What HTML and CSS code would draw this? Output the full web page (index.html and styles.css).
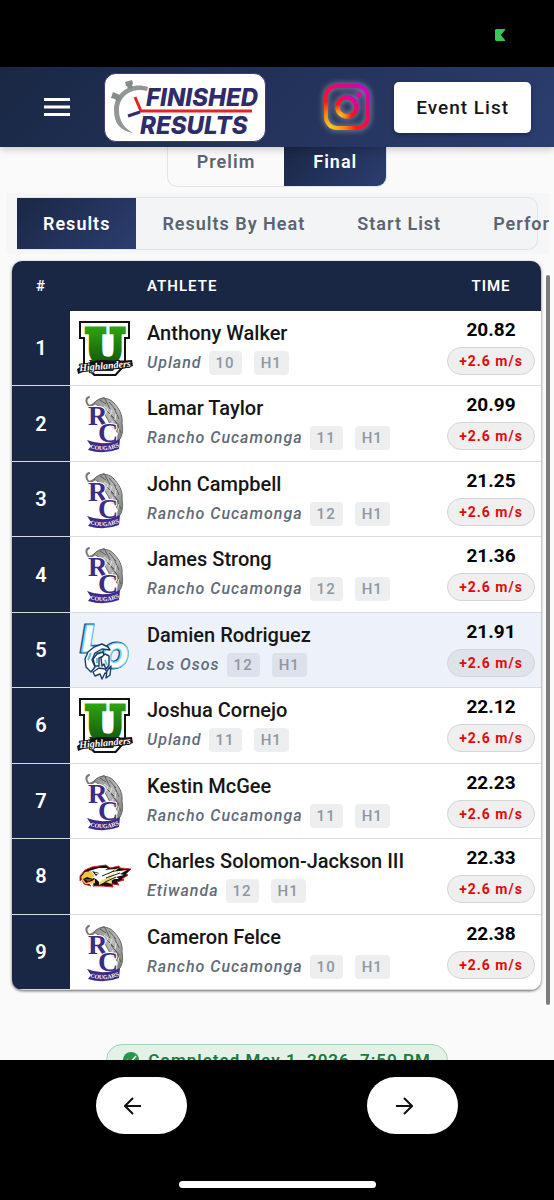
FILE: index.html
```html
<!DOCTYPE html>
<html lang="en">
<head>
<meta charset="utf-8">
<meta name="viewport" content="width=device-width, initial-scale=1">
<title>Finished Results</title>
<link rel="stylesheet" href="styles.css">
</head>
<body>
<svg class="defs" width="0" height="0" aria-hidden="true">
  <defs>
    <linearGradient id="green" x1="0" y1="0" x2="0" y2="1"><stop offset="0" stop-color="#2fb012"/><stop offset="1" stop-color="#0d4a08"/></linearGradient>
    <radialGradient id="insta" cx="0.1" cy="1" r="1.25"><stop offset="0" stop-color="#ffd21c"/><stop offset="0.3" stop-color="#ff7a0a"/><stop offset="0.5" stop-color="#ff1a12"/><stop offset="0.72" stop-color="#f4094e"/><stop offset="1" stop-color="#cf00c4"/></radialGradient>
    <linearGradient id="fur" x1="0" y1="0" x2="1" y2="1"><stop offset="0" stop-color="#8d8d8d"/><stop offset="0.5" stop-color="#b9b9b9"/><stop offset="1" stop-color="#777"/></linearGradient>
  </defs>
  <symbol id="upland" viewBox="0 0 56 58">
    <path d="M2 1H53V19H49V45L39 56H17L6 45V19H2Z" fill="#111"/>
    <path d="M4 3H51V17H47V44L38 54H18L8 44V17H4Z" fill="#fff"/>
    <path d="M12 40L19 51H36L43 40Z" fill="#123d0c"/>
    <text x="28" y="42" text-anchor="middle" class="mark-u">U</text>
    <path d="M0 49Q14 39 28 40T55 40L56 46Q44 50 29 49T1 54Z" fill="#151515"/>
    <text x="28" y="49" text-anchor="middle" transform="rotate(-5 28 46)" class="mark-high">Highlanders</text>
  </symbol>
  <symbol id="rancho" viewBox="0 0 56 58">
    <path d="M12 11C8 7 9 3 12 2M12 11C17 11 19 5 27 3" fill="none" stroke="#777" stroke-width="2" stroke-linecap="round"/>
    <path d="M17 8C22 2 31 2 36 7C42 13 46 20 45 28C46 34 46 39 43 44L39 45L41 39L38 33L34 31L31 25L27 18L23 12Z" fill="url(#fur)" stroke="#686868"/>
    <path d="M23 5L29 9M28 4L33 14M32 7L39 15M30 16L37 23M37 13L42 24M34 21L42 31M39 27L44 38M35 28L41 35" stroke="#5c5c5c" fill="none"/>
    <path d="M27 11L31 14L29 18M35 15L33 20M39 19L38 25M36 26L34 30M42 33L40 41" stroke="#e2e2e2" fill="none"/>
    <text x="11" y="30" class="mark-r">R</text>
    <text x="21" y="47" class="mark-c">C</text>
    <path d="M10 45Q27 52 43 44L42 54Q27 60 11 55L14 51Z" fill="#3d2b86"/>
    <path id="ribbon" d="M13 53Q27 58 41 52" fill="none"/>
    <text class="mark-cougars"><textPath href="#ribbon">COUGARS</textPath></text>
  </symbol>
  <symbol id="losos" viewBox="0 0 56 58">
    <g class="lo-shadow"><text x="4" y="30" class="mark-l">L</text><text x="24" y="46" class="mark-o">O</text></g>
    <g class="lo-face"><text x="5" y="30" class="mark-l">L</text><text x="25" y="46" class="mark-o">O</text></g>
    <g fill="#fff" stroke="#183c6d" stroke-width="1.4" stroke-linejoin="round">
      <path d="M14 50L9 45L8 37L11 30L17 25L25 22L31 25L33 28L25 27L18 31L15 38L18 45Z"/>
      <path d="M18 44L16 37L20 32L26 30L27 34L22 36L22 44Z"/>
      <path d="M25 44L24 36L28 32L32 34L32 43L29 47L27 42Z"/>
      <path d="M16 50L22 46L28 47L31 52L28 51L25 57L23 52L18 54Z"/>
      <path d="M30 49L34 44L33 53L29 56Z"/>
    </g>
    <path d="M11 38L14 31M20 41L20 36M28 38L30 43" stroke="#68bde5" fill="none" stroke-width="2"/>
  </symbol>
  <symbol id="etiwanda" viewBox="0 0 56 58">
    <path d="M3 28L8 22L15 19L29 17L33 20L42 18L43 20L54 21L49 26L51 27L45 31L47 32L40 34L42 37L35 36L36 39L25 38L16 38L17 34L11 35L14 38L7 36L5 31L3 33Z" fill="#171010" stroke="#db1f27" stroke-width="1"/>
    <path d="M12 23L22 20L31 20L28 22L38 21L34 24L50 22L43 26L47 27L39 29L42 31L34 31L35 35L29 33L23 35L19 31L14 29Z" fill="#fff"/>
    <path d="M22 34L29 30L38 24L34 30L41 29L34 33L35 36L28 34L22 37ZM35 22L42 20L38 23Z" fill="#eedb79"/>
    <path d="M4 29L8 24L14 23L17 27L16 31L10 29L6 31L9 35L15 33L18 31L18 35L12 36L8 36L5 32Z" fill="#ebc744"/>
    <path d="M15 23L22 25L19 28Z" fill="#171010"/><path d="M18 25L21 26" stroke="#fff"/>
    <path d="M8 31L15 31L11 34Z" fill="#c5252b"/>
    <path d="M25 28L37 23M29 30L43 25M28 34L39 29" stroke="#292019" fill="none"/>
  </symbol>
</svg>
<div class="app">
  <div class="system-bar">
    <svg class="battery" viewBox="0 0 10 12" aria-hidden="true"><path d="M1 0H10V1L6 6L10 11V12H1L0 11V1Z" fill="#36c759"/></svg>
  </div>
  <header class="header">
    <button class="menu" aria-label="Menu"><svg viewBox="0 0 26 18" aria-hidden="true"><path d="M0 1.5H26M0 9H26M0 16.5H26" stroke="#fff" stroke-width="3"/></svg></button>
    <a class="brand" href="#" aria-label="Finished Results">
      <svg viewBox="0 0 160 67" aria-hidden="true">
        <path d="M43 13C26 7 9 19 9 36C9 50 16 57 28 59C19 54 14 47 14 36C14 22 27 13 42 17Z" fill="#919696"/>
        <path d="M20 8L27 6L28 10L27 11L28 14L23 15L22 12L21 12ZM8 18L15 21L14 24L16 24L12 28L10 25L6 24Z" fill="#858b8b"/>
        <path d="M30 23L36 37H147" fill="none" stroke="#e3232b" stroke-width="3"/><path d="M35 38L23 42" stroke="#302b69" stroke-width="3"/>
        <text x="41" y="32" class="wordmark">FINISHED</text>
        <text x="35" y="60" class="wordmark">RESULTS</text>
      </svg>
    </a>
    <a class="instagram" href="#" aria-label="Instagram"><svg viewBox="0 0 46 46" fill="none" stroke="url(#insta)" aria-hidden="true"><rect x="2" y="2" width="42" height="42" rx="11" stroke-width="4"/><circle cx="23" cy="23" r="9.5" stroke-width="4.6"/><circle cx="35" cy="11" r="2.8" fill="#df00a0" stroke="none"/></svg></a>
    <button class="event-list">Event List</button>
  </header>
  <main class="main">
    <div class="rounds"><button class="round">Prelim</button><button class="round active">Final</button></div>
    <div class="tab-strip"><nav class="tabs"><button class="tab active">Results</button><button class="tab">Results By Heat</button><button class="tab">Start List</button><button class="tab">Performance</button></nav></div>
    <div class="card">
      <table class="results">
        <thead><tr><th class="place">#</th><th class="logo"></th><th class="athlete">ATHLETE</th><th class="time">TIME</th></tr></thead>
        <tbody>
          <tr><td class="place">1</td><td class="logo"><svg><use href="#upland"/></svg></td><td class="athlete"><div class="name">Anthony Walker</div><div class="meta"><i>Upland</i><span class="chip">10</span><span class="chip heat">H1</span></div></td><td class="time"><div class="mark">20.82</div><span class="wind">+2.6 m/s</span></td></tr>
          <tr><td class="place">2</td><td class="logo"><svg><use href="#rancho"/></svg></td><td class="athlete"><div class="name">Lamar Taylor</div><div class="meta"><i>Rancho Cucamonga</i><span class="chip">11</span><span class="chip heat">H1</span></div></td><td class="time"><div class="mark">20.99</div><span class="wind">+2.6 m/s</span></td></tr>
          <tr><td class="place">3</td><td class="logo"><svg><use href="#rancho"/></svg></td><td class="athlete"><div class="name">John Campbell</div><div class="meta"><i>Rancho Cucamonga</i><span class="chip">12</span><span class="chip heat">H1</span></div></td><td class="time"><div class="mark">21.25</div><span class="wind">+2.6 m/s</span></td></tr>
          <tr><td class="place">4</td><td class="logo"><svg><use href="#rancho"/></svg></td><td class="athlete"><div class="name">James Strong</div><div class="meta"><i>Rancho Cucamonga</i><span class="chip">12</span><span class="chip heat">H1</span></div></td><td class="time"><div class="mark">21.36</div><span class="wind">+2.6 m/s</span></td></tr>
          <tr class="selected"><td class="place">5</td><td class="logo"><svg><use href="#losos"/></svg></td><td class="athlete"><div class="name">Damien Rodriguez</div><div class="meta"><i>Los Osos</i><span class="chip">12</span><span class="chip heat">H1</span></div></td><td class="time"><div class="mark">21.91</div><span class="wind">+2.6 m/s</span></td></tr>
          <tr><td class="place">6</td><td class="logo"><svg><use href="#upland"/></svg></td><td class="athlete"><div class="name">Joshua Cornejo</div><div class="meta"><i>Upland</i><span class="chip">11</span><span class="chip heat">H1</span></div></td><td class="time"><div class="mark">22.12</div><span class="wind">+2.6 m/s</span></td></tr>
          <tr><td class="place">7</td><td class="logo"><svg><use href="#rancho"/></svg></td><td class="athlete"><div class="name">Kestin McGee</div><div class="meta"><i>Rancho Cucamonga</i><span class="chip">11</span><span class="chip heat">H1</span></div></td><td class="time"><div class="mark">22.23</div><span class="wind">+2.6 m/s</span></td></tr>
          <tr><td class="place">8</td><td class="logo"><svg><use href="#etiwanda"/></svg></td><td class="athlete"><div class="name">Charles Solomon-Jackson III</div><div class="meta"><i>Etiwanda</i><span class="chip">12</span><span class="chip heat">H1</span></div></td><td class="time"><div class="mark">22.33</div><span class="wind">+2.6 m/s</span></td></tr>
          <tr><td class="place">9</td><td class="logo"><svg><use href="#rancho"/></svg></td><td class="athlete"><div class="name">Cameron Felce</div><div class="meta"><i>Rancho Cucamonga</i><span class="chip">10</span><span class="chip heat">H1</span></div></td><td class="time"><div class="mark">22.38</div><span class="wind">+2.6 m/s</span></td></tr>
        </tbody>
      </table>
    </div>
    <div class="status-row"><div class="status"><svg viewBox="0 0 16 16" aria-hidden="true"><circle cx="8" cy="8" r="8" fill="#27964b"/><path d="M4 8L7 11L13 4" fill="none" stroke="#fff" stroke-width="1.5"/></svg>Completed May 1, 2026, 7:50 PM</div></div>
    <div class="scrollbar"></div>
  </main>
  <footer class="footer">
    <div class="pager">
      <button class="page-button" aria-label="Previous"><svg viewBox="0 0 18 18" aria-hidden="true"><path d="M17 9H2M9 1L1 9L9 17" /></svg></button>
      <button class="page-button" aria-label="Next"><svg viewBox="0 0 18 18" aria-hidden="true"><path d="M1 9H16M9 1L17 9L9 17"/></svg></button>
    </div>
    <div class="home-bar"></div>
  </footer>
</div>
</body>
</html>
```
FILE: styles.css
```css
* { box-sizing: border-box; }
body { margin: 0; background: #000; color: #161616; font-family: Roboto, "Liberation Sans", sans-serif; font-weight: 500; }
button { font: inherit; color: inherit; border: 0; padding: 0; margin: 0; background: none; cursor: pointer; white-space: nowrap; }
svg { display: block; }
.defs { position: absolute; }
.app { display: flex; flex-direction: column; height: 100vh; }

.event-list, .round, .tab, th, .meta, .wind, .status { letter-spacing: 1px; }

.system-bar { flex: none; height: 67px; padding: 29px 49px 0 0; background: #000; }
.battery { width: 10px; height: 12px; margin-left: auto; }
.header { flex: none; position: relative; z-index: 2; display: flex; align-items: center; height: 80px; padding: 0 23px 0 44px; background: linear-gradient(135deg, #1a2744, #2c3e70); box-shadow: 0 2px 8px rgba(0, 0, 0, .22); }
.menu svg { width: 26px; height: 18px; }
.brand { width: 162px; margin-left: 34px; background: #fff; border: 1px solid #403b78; border-radius: 12px; }
.brand svg { width: 100%; }
.wordmark { font: italic 800 24px Inter, sans-serif; fill: #302b69; }
.instagram { margin-left: auto; filter: drop-shadow(0 0 3px rgba(255, 255, 255, .55)); }
.instagram svg { width: 46px; height: 46px; }
.event-list { height: 51px; padding: 0 22px; margin-left: 24px; border-radius: 5px; background: #fff; font-size: 19px; box-shadow: 0 2px 4px rgba(0, 0, 0, .3); }

.main { position: relative; flex: 1; min-height: 0; display: flex; flex-direction: column; overflow: hidden; background: #fafafa; }
.rounds { flex: none; align-self: center; display: flex; height: 40px; border: 1px solid #e2e4e8; border-top: 0; border-radius: 0 0 10px 10px; overflow: hidden; background: #fafafa; }
.round { padding: 0 29px 10px; font-size: 18px; font-weight: 600; color: #5b6470; }
.active { color: #fff; background: linear-gradient(135deg, #1a2744, #2c3e70); }
.tab-strip { flex: none; margin: 6px 5px 7px 6px; padding: 4px 11px; background: #f5f6f7; overflow: hidden; }
.tabs { display: flex; height: 53px; border: 1px solid #e2e4e8; border-left: 0; border-radius: 0 10px 10px 0; background: #f3f4f6; }
.tab { flex: none; padding: 0 26px; font-size: 18px; font-weight: 600; color: #5b6470; }
.tab.active { color: #fff; }

.card { flex: 1; min-height: 0; margin: 0 13px 0 12px; border-radius: 10px; overflow: hidden; background: #fff; box-shadow: 0 1px 3px rgba(0, 0, 0, .6); }
.results { width: 100%; height: 100%; border-collapse: separate; border-spacing: 0; }
th { height: 50px; padding: 0; background: #1a2744; color: #fff; font-size: 15px; font-weight: 600; }
td { padding: 0; border-bottom: 1px solid #d9dbde; vertical-align: top; }
.place { width: 58px; text-align: center; }
td.place { background: #1a2744; color: #fff; font-size: 20px; font-weight: 600; vertical-align: middle; }
.logo { width: 77px; }
td.logo { padding: 9px 0 0 7px; }
.logo svg { width: 56px; height: 58px; }
th.athlete { text-align: left; }
td.athlete { padding-top: 10px; white-space: nowrap; }
.time { width: 100px; text-align: center; }
td.time { padding-top: 8px; }
.name { font-size: 20px; line-height: 24px; }
.meta { display: flex; align-items: center; margin-top: 6px; font-size: 16px; line-height: 24px; color: #626b77; }
.chip { padding: 0 7px; margin-left: 7px; border-radius: 4px; background: rgba(90, 100, 115, .11); color: #8f969f; font-size: 15px; }
.heat { margin-left: 12px; }
.mark { color: #000; font-size: 19px; font-weight: 700; line-height: 22px; margin-bottom: 6px; }
.wind { display: inline-block; padding: 0 11px; border: 1px solid #d5d5d5; border-radius: 14px; background: #efefef; color: #e20909; font-size: 14px; font-weight: 700; line-height: 26px; }
.selected td:not(.place) { background: #ecf1fa; }
.selected .wind { background: #dfe3e9; }

.status-row { flex: none; height: 16px; margin-top: 54px; display: flex; align-items: flex-start; justify-content: center; }
.status { flex: none; display: flex; align-items: center; gap: 9px; height: 32px; padding: 0 16px; border: 1px solid #a6d3b3; border-radius: 16px; background: #e3f1e7; color: #1b7a3b; font-size: 17px; font-weight: 600; }
.status svg { width: 16px; height: 16px; }
.scrollbar { position: absolute; right: 4px; top: 128px; bottom: 55px; width: 4px; border-radius: 2px; background: #7d7d7d; }

.footer { flex: none; height: 140px; padding: 17px 0 12px; display: flex; flex-direction: column; align-items: center; justify-content: space-between; background: #000; }
.pager { display: flex; gap: 180px; }
.page-button { display: flex; align-items: center; justify-content: center; width: 91px; height: 57px; padding-right: 17px; border-radius: 29px; background: #fff; }
.page-button svg { width: 18px; height: 18px; fill: none; stroke: #111; stroke-width: 2; }
.home-bar { width: 197px; height: 7px; border-radius: 4px; background: #fff; }

.mark-u { font: 700 44px "DejaVu Serif", serif; fill: url(#green); stroke: url(#green); stroke-width: 5px; }
.mark-high { font: italic 700 10px "Liberation Serif", serif; fill: #fff; stroke: #111; stroke-width: 2px; paint-order: stroke; }
.mark-r { font: 700 27px "Liberation Serif", serif; fill: #3d2b86; stroke: #fff; stroke-width: 2px; paint-order: stroke; }
.mark-c { font: 700 28px "Liberation Serif", serif; fill: #3d2b86; stroke: #fff; stroke-width: 2px; paint-order: stroke; }
.mark-cougars { font: 700 6px "Liberation Serif", serif; fill: #fff; }
.mark-l { font: italic 900 37px Inter, sans-serif; }
.mark-o { font: italic 900 34px Inter, sans-serif; }
.lo-shadow { fill: #72d0f1; stroke: #174f86; stroke-width: 3px; paint-order: stroke; }
.lo-face { fill: #fff; stroke: #72d0f1; stroke-width: 1px; }
```
